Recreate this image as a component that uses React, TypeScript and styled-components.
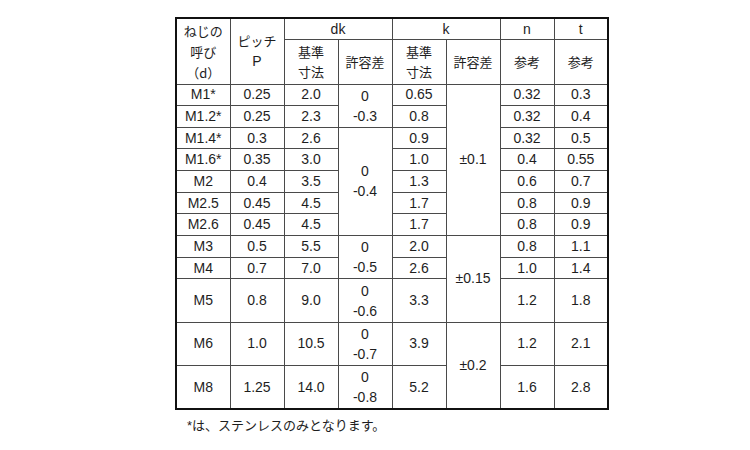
import React from "react";
import styled, { createGlobalStyle } from "styled-components";

const Global = createGlobalStyle`
  html, body { margin: 0; padding: 0; background: #ffffff; }
  body {
    font-family: "Liberation Sans", Arial, "Noto Sans CJK JP", sans-serif;
    color: #1e1e1e;
  }
`;

const Page = styled.div`
  width: 750px;
  height: 450px;
  box-sizing: border-box;
  padding: 17px 0 0 175px;
  display: flex;
  flex-direction: column;
  align-items: flex-start;
`;

const Table = styled.table`
  width: 434px;
  table-layout: fixed;
  border-collapse: collapse;
  border: 2px solid #111;
  font-size: 14px;
  line-height: 19px;
`;

const Cell = styled.td<{ $h?: number }>`
  border: 1px solid #4a4a4a;
  padding: 0;
  text-align: center;
  vertical-align: middle;
  font-weight: normal;
  height: ${(p) => (p.$h ? `${p.$h}px` : "auto")};
`;

const HeadCell = styled(Cell).attrs({ as: "th" })`
  font-family: "Liberation Sans", Arial, "Noto Sans CJK JP", sans-serif;
`;

const Jp = styled.span<{ $lh?: number }>`
  display: block;
  font-family: "Noto Sans CJK JP", "Liberation Sans", sans-serif;
  font-size: 13px;
  line-height: ${(p) => p.$lh ?? 20}px;
`;

const Latin = styled.span<{ $lh?: number }>`
  display: block;
  font-size: 14px;
  line-height: ${(p) => p.$lh ?? 20}px;
`;

const Note = styled.div`
  margin: 8px 0 0 12px;
  font-family: "Liberation Sans", "Noto Sans CJK JP", sans-serif;
  font-size: 13px;
  line-height: 16px;
  color: #1e1e1e;
`;

type Row = [string, string, string, string, string, string];

const rows: Row[] = [
  ["M1*", "0.25", "2.0", "0.65", "0.32", "0.3"],
  ["M1.2*", "0.25", "2.3", "0.8", "0.32", "0.4"],
  ["M1.4*", "0.3", "2.6", "0.9", "0.32", "0.5"],
  ["M1.6*", "0.35", "3.0", "1.0", "0.4", "0.55"],
  ["M2", "0.4", "3.5", "1.3", "0.6", "0.7"],
  ["M2.5", "0.45", "4.5", "1.7", "0.8", "0.9"],
  ["M2.6", "0.45", "4.5", "1.7", "0.8", "0.9"],
  ["M3", "0.5", "5.5", "2.0", "0.8", "1.1"],
  ["M4", "0.7", "7.0", "2.6", "1.0", "1.4"],
  ["M5", "0.8", "9.0", "3.3", "1.2", "1.8"],
  ["M6", "1.0", "10.5", "3.9", "1.2", "2.1"],
  ["M8", "1.25", "14.0", "5.2", "1.6", "2.8"],
];

const dkTol: Record<number, { span: number; value: string }> = {
  0: { span: 2, value: "-0.3" },
  2: { span: 5, value: "-0.4" },
  7: { span: 2, value: "-0.5" },
  9: { span: 1, value: "-0.6" },
  10: { span: 1, value: "-0.7" },
  11: { span: 1, value: "-0.8" },
};

const kTol: Record<number, { span: number; value: string }> = {
  0: { span: 7, value: "±0.1" },
  7: { span: 3, value: "±0.15" },
  10: { span: 2, value: "±0.2" },
};

const rowHeight = (i: number) => (i >= 9 ? 42.3 : 20.67);

export default function App() {
  return (
    <>
      <Global />
      <Page>
        <Table>
          <colgroup>
            {Array.from({ length: 8 }).map((_, i) => (
              <col key={i} style={{ width: `${100 / 8}%` }} />
            ))}
          </colgroup>
          <thead>
            <tr>
              <HeadCell rowSpan={2} $h={21}>
                <Jp $lh={21}>ねじの</Jp>
                <Jp $lh={21}>呼び</Jp>
                <Jp $lh={21}>（d）</Jp>
              </HeadCell>
              <HeadCell rowSpan={2}>
                <Jp>ピッチ</Jp>
                <Latin>P</Latin>
              </HeadCell>
              <HeadCell colSpan={2}>
                <Latin>dk</Latin>
              </HeadCell>
              <HeadCell colSpan={2}>
                <Latin>k</Latin>
              </HeadCell>
              <HeadCell>
                <Latin>n</Latin>
              </HeadCell>
              <HeadCell>
                <Latin>t</Latin>
              </HeadCell>
            </tr>
            <tr>
              <HeadCell $h={43.5}>
                <Jp>基準</Jp>
                <Jp>寸法</Jp>
              </HeadCell>
              <HeadCell>
                <Jp>許容差</Jp>
              </HeadCell>
              <HeadCell>
                <Jp>基準</Jp>
                <Jp>寸法</Jp>
              </HeadCell>
              <HeadCell>
                <Jp>許容差</Jp>
              </HeadCell>
              <HeadCell>
                <Jp>参考</Jp>
              </HeadCell>
              <HeadCell>
                <Jp>参考</Jp>
              </HeadCell>
            </tr>
          </thead>
          <tbody>
            {rows.map((r, i) => (
              <tr key={r[0]}>
                <Cell $h={rowHeight(i)}>{r[0]}</Cell>
                <Cell>{r[1]}</Cell>
                <Cell>{r[2]}</Cell>
                {dkTol[i] && (
                  <Cell rowSpan={dkTol[i].span}>
                    <Latin>0</Latin>
                    <Latin>{dkTol[i].value}</Latin>
                  </Cell>
                )}
                <Cell>{r[3]}</Cell>
                {kTol[i] && <Cell rowSpan={kTol[i].span}>{kTol[i].value}</Cell>}
                <Cell>{r[4]}</Cell>
                <Cell>{r[5]}</Cell>
              </tr>
            ))}
          </tbody>
        </Table>
        <Note>*は、ステンレスのみとなります。</Note>
      </Page>
    </>
  );
}
